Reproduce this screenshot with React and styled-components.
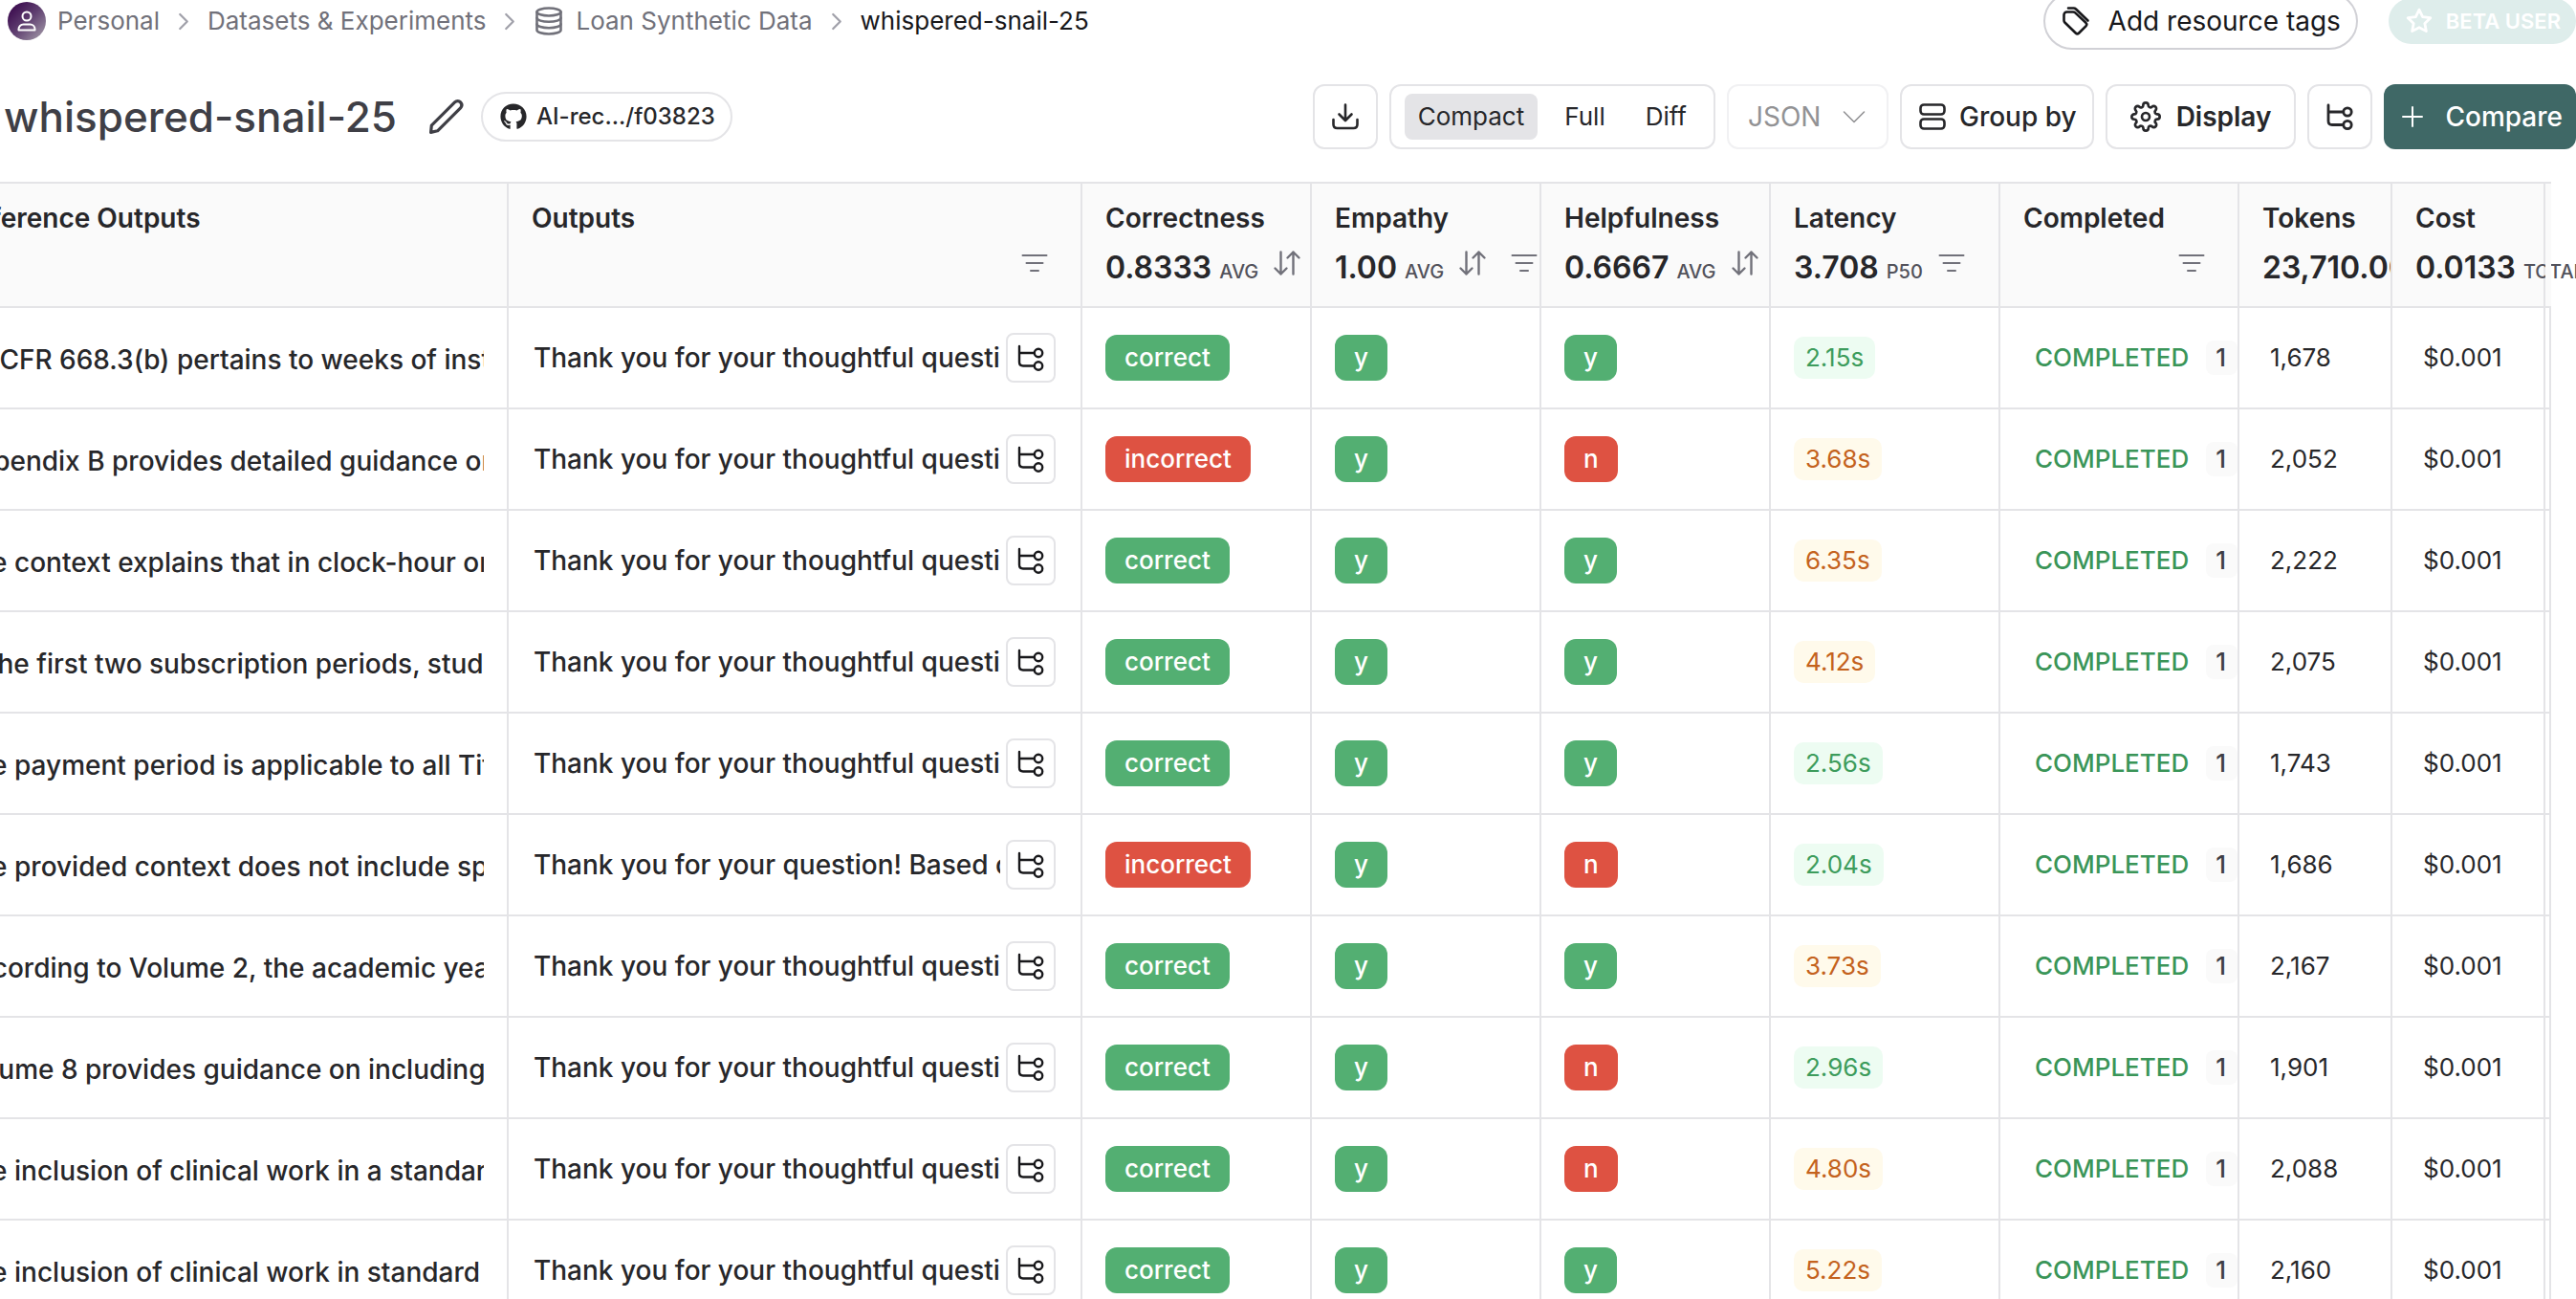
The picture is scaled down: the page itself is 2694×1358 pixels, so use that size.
import React, { useState } from 'react';
import styled, { createGlobalStyle, css } from 'styled-components';
import { FaGithub } from 'react-icons/fa';
import { FiSettings } from 'react-icons/fi';

const GlobalStyle = createGlobalStyle`
  *, *::before, *::after { box-sizing: border-box; }
  body {
    margin: 0;
    background: #ffffff;
    color: #27272a;
    font-family: Inter, "Liberation Sans", sans-serif;
    font-size: 28px;
    line-height: 40px;
  }
  button, select { font: inherit; color: inherit; margin: 0; }
`;

const line = '#e4e4e7';

/* ---------- icons ---------- */

const Icon = styled.svg`
  flex: none;
  display: block;
  width: ${(p) => p.$size || 32}px;
  height: ${(p) => p.$size || 32}px;
  fill: none;
  stroke: currentColor;
  stroke-width: ${(p) => p.$stroke || 2};
  stroke-linecap: round;
  stroke-linejoin: round;
`;

const UserIcon = () => (
  <Icon $size={24} viewBox="0 0 24 24" aria-hidden="true">
    <circle cx="12" cy="7" r="4.5" />
    <path d="M3.5 21.5v-1a5 5 0 0 1 5-5h7a5 5 0 0 1 5 5v1z" />
  </Icon>
);
const ChevronRight = () => (
  <Icon $size={30} $stroke={2.4} viewBox="0 0 32 32" aria-hidden="true">
    <path d="m12 8.500 8 8-8 8" />
  </Icon>
);
const DatabaseIcon = () => (
  <Icon $size={32} $stroke={2.6} viewBox="0 0 32 32" aria-hidden="true">
    <ellipse cx="16" cy="6.500" rx="12.500" ry="4" />
    <path d="M3.500 6.500v19c0 2.200 5.600 4 12.500 4s12.500-1.800 12.500-4v-19" />
    <path d="M3.500 12.800c0 2.200 5.600 4 12.500 4s12.500-1.800 12.500-4M3.500 19.200c0 2.200 5.600 4 12.500 4s12.500-1.800 12.500-4" />
  </Icon>
);
const PencilIcon = () => (
  <Icon $size={40} $stroke={3.2} viewBox="0 0 40 40" aria-hidden="true">
    <path d="M3.600 36.400l.7-7.200L28.600 4.900c1.800-1.800 4.400-1.800 6 0s1.700 4.100 0 5.900L10.600 34.800z" />
  </Icon>
);
const TagIcon = () => (
  <Icon $size={32} $stroke={2.6} viewBox="0 0 32 32" aria-hidden="true">
    <path d="M3.500 9.500v5.800c0 .8.300 1.600.9 2.200l11.300 11c1 1 2.500 1 3.500 0l7.200-7.200c1-1 1-2.500 0-3.500L15.300 7.400c-.6-.6-1.400-.9-2.200-.9H6.500c-1.700 0-3 1.300-3 3z" />
    <path d="M8 2.500h5.600c.9 0 1.700.3 2.400 1l12.500 12" />
  </Icon>
);
const StarIcon = () => (
  <Icon $size={28} $stroke={2.4} viewBox="0 0 24 24" aria-hidden="true">
    <path d="M12 1.800l3.100 6.400 7 1-5.100 4.900 1.300 7L12 17.800l-6.300 3.300 1.300-7L1.900 9.200l7-1z" />
  </Icon>
);
const DownloadIcon = () => (
  <Icon $size={32} $stroke={2.6} viewBox="0 0 32 32" aria-hidden="true">
    <path d="M16 3.500v16M9.500 13.500l6.500 6.500 6.500-6.500M3.500 19v5c0 2.500 1.500 4 4 4h17c2.500 0 4-1.500 4-4v-5" />
  </Icon>
);
const ChevronDown = () => (
  <Icon $size={32} $stroke={1.6} viewBox="0 0 32 32" aria-hidden="true">
    <path d="m5.500 11 10.500 10.500L26.500 11" />
  </Icon>
);
const GroupIcon = () => (
  <Icon $size={32} $stroke={2.6} viewBox="0 0 32 32" aria-hidden="true">
    <rect x="3.500" y="3.500" width="25" height="10" rx="3.500" />
    <rect x="3.500" y="18.500" width="25" height="10" rx="3.500" />
  </Icon>
);
const TreeIcon = ({ stroke }) => (
  <Icon $size={32} $stroke={stroke || 2.4} viewBox="0 0 32 32" aria-hidden="true">
    <path d="M4 4v16.500c0 2.500 1.500 4 4 4h11.500M4 11h15.500" />
    <circle cx="24" cy="11" r="4.200" />
    <circle cx="24" cy="24.500" r="4.200" />
  </Icon>
);
const PlusIcon = () => (
  <Icon $size={32} viewBox="0 0 32 32" aria-hidden="true">
    <path d="M16 6v20M6 16h20" />
  </Icon>
);
const FilterIcon = () => (
  <Icon $size={32} viewBox="0 0 32 32" aria-hidden="true">
    <path d="M3.500 8h25M7.500 16h17M12 24h8" />
  </Icon>
);
const SortIcon = () => (
  <Icon $size={32} $stroke={2.4} viewBox="0 0 32 32" aria-hidden="true">
    <path d="M9.500 4.500v23M3.500 21.500l6 6 6-6M22.500 27.500v-23M16.500 10.500l6-6 6 6" />
  </Icon>
);

/* ---------- page frame ---------- */

const Page = styled.div`
  height: 100vh;
  overflow: hidden;
  display: flex;
  flex-direction: column;
`;

const TopBar = styled.header`
  flex: none;
  height: 44px;
  display: flex;
  align-items: center;
  justify-content: space-between;
`;

const Crumbs = styled.nav`
  display: flex;
  align-items: center;
  gap: 10px;
  padding-left: 8px;
  color: #a1a1aa;
`;

const Crumb = styled.a`
  display: flex;
  align-items: center;
  gap: 12px;
  text-decoration: none;
  white-space: nowrap;
  font-size: 26px;
  line-height: 32px;
  color: ${(p) => (p.$current ? '#18181b' : '#71717a')};
`;

const Avatar = styled.span`
  display: grid;
  place-items: center;
  width: 40px;
  height: 40px;
  border-radius: 50%;
  color: #ffffff;
  background: linear-gradient(135deg, #3f1052 15%, #5f3f70 50%, #a9a3ad 100%);
`;

const TopActions = styled.div`
  display: flex;
  align-items: center;
  gap: 32px;
`;

const TagsButton = styled.button`
  display: flex;
  align-items: center;
  gap: 18px;
  height: 60px;
  padding: 0 16px;
  border: 2px solid #d1d1d6;
  border-radius: 30px;
  background: #ffffff;
  color: #18181b;
  white-space: nowrap;
`;

const BetaBadge = styled.span`
  display: flex;
  align-items: center;
  gap: 14px;
  height: 48px;
  padding: 0 16px 0 18px;
  border-radius: 24px;
  background: #deedeb;
  color: #ffffff;
  font-size: 22px;
  font-weight: 600;
  white-space: nowrap;
`;

const Toolbar = styled.div`
  flex: none;
  display: flex;
  align-items: center;
  justify-content: space-between;
  margin: 44px 0 34px;
`;

const TitleGroup = styled.div`
  display: flex;
  align-items: center;
  padding-left: 4px;
`;

const Title = styled.h1`
  margin: 0 32px 0 0;
  font-size: 44px;
  line-height: 56px;
  font-weight: 500;
  color: #3f3f46;
`;

const PlainButton = styled.button`
  display: grid;
  place-items: center;
  padding: 0;
  border: 0;
  background: none;
  color: ${(p) => p.$color || '#3f3f46'};
`;

const RepoLink = styled.a`
  display: flex;
  align-items: center;
  gap: 10px;
  height: 52px;
  margin-left: 16px;
  padding: 0 16px 0 18px;
  border: 2px solid ${line};
  border-radius: 26px;
  color: #27272a;
  font-size: 24px;
  font-weight: 500;
  text-decoration: none;
  white-space: nowrap;
`;

const Actions = styled.div`
  display: flex;
  align-items: center;
  gap: 12px;
`;

const frame = css`
  height: 68px;
  border: 2px solid ${line};
  border-radius: 12px;
  background: #ffffff;
`;

const IconButton = styled.button`
  ${frame}
  width: 68px;
  padding: 0;
  display: grid;
  place-items: center;
`;

const ToolButton = styled.button`
  ${frame}
  display: flex;
  align-items: center;
  gap: ${(p) => p.$gap || 12}px;
  padding: 0 ${(p) => p.$pad || 16}px;
  font-weight: ${(p) => p.$weight || 500};
  white-space: nowrap;
`;

const CompareButton = styled.button`
  display: flex;
  align-items: center;
  gap: 18px;
  height: 68px;
  padding: 0 14px;
  border: 0;
  border-radius: 12px;
  background: #3f6866;
  color: #ffffff;
  font-weight: 500;
`;

const Segmented = styled.div`
  ${frame}
  display: flex;
  align-items: center;
  gap: 14px;
  padding: 0 14px;
`;

const Segment = styled.button`
  height: 48px;
  padding: 0 14px;
  border: 0;
  border-radius: 8px;
  font-size: 26px;
  font-weight: 400;
  background: ${(p) => (p.$active ? line : 'transparent')};
`;

const SelectBox = styled.label`
  ${frame}
  display: grid;
  grid-template-columns: 1fr 32px;
  align-items: center;
  width: 169px;
  padding: 0 18px 0 20px;
  border-color: #f1f1f3;
  color: #929294;

  select {
    grid-area: 1 / 1 / 2 / 3;
    appearance: none;
    padding: 0;
    border: 0;
    background: none;
    opacity: 1;
  }
  svg { grid-area: 1 / 2; pointer-events: none; }
`;

/* ---------- table ---------- */

const Table = styled.table`
  flex: none;
  width: calc(100% + 42px);
  margin-left: -68px;
  table-layout: fixed;
  border-collapse: separate;
  border-spacing: 0;
`;

const Col = styled.col`
  width: ${(p) => (p.$w ? `${p.$w}px` : 'auto')};
`;

const HeadCell = styled.th`
  height: 132px;
  padding: 16px 0 0 24px;
  border-top: 2px solid ${line};
  border-bottom: 2px solid ${line};
  border-right: 2px solid ${line};
  background: #fafafa;
  text-align: left;
  vertical-align: top;
  font-weight: 600;
  white-space: nowrap;
  overflow: ${(p) => (p.$spill ? 'visible' : 'hidden')};
`;

const EndHead = styled.td`
  position: relative;
  border-top: 2px solid ${line};
  border-bottom: 2px solid ${line};
  background: #fafafa;
`;

const Metric = styled.div`
  display: flex;
  align-items: center;
  height: 40px;
  margin-top: 14px;
  gap: 14px;
  justify-content: ${(p) => (p.$end ? 'flex-end' : 'flex-start')};
  padding-right: ${(p) => (p.$end || 0)}px;
`;

const MetricValue = styled.span`
  display: flex;
  align-items: baseline;
  gap: 8px;
  font-size: 32px;

  small {
    font-size: 20px;
    font-weight: 500;
    color: #52525b;
  }
`;

const MetricTools = styled.span`
  display: flex;
  align-items: center;
  gap: 22px;
  margin-bottom: 14px;
`;

const Cell = styled.td`
  height: 106px;
  padding: 0 0 0 ${(p) => (p.$pad === undefined ? 24 : p.$pad)}px;
  border-bottom: 2px solid ${line};
  border-right: 2px solid ${line};
  font-size: ${(p) => p.$size || 26}px;
  white-space: nowrap;
  overflow: hidden;
`;

const Reference = styled.div`
  margin-right: 24px;
  padding-top: 4px;
  overflow: hidden;
  font-weight: 500;
`;

const OutputRow = styled.div`
  display: flex;
  align-items: center;
  gap: 6px;
  padding-right: 26px;
`;

const OutputText = styled.span`
  flex: 1;
  min-width: 0;
  overflow: hidden;
  font-weight: 500;
`;

const TraceButton = styled.button`
  flex: none;
  width: 52px;
  height: 52px;
  padding: 0;
  display: grid;
  place-items: center;
  border: 2px solid ${line};
  border-radius: 8px;
  background: #ffffff;
  color: #18181b;
`;

const Score = styled.span`
  display: inline-flex;
  align-items: center;
  height: 48px;
  padding: 0 20px;
  border-radius: 12px;
  background: ${(p) => (p.$good ? '#53af72' : '#de5242')};
  color: #ffffff;
  font-weight: 500;
  vertical-align: middle;
`;

const Latency = styled.span`
  display: inline-flex;
  align-items: center;
  height: 44px;
  padding: 0 12px;
  border-radius: 10px;
  background: ${(p) => (p.$fast ? '#edfcf2' : '#fffaeb')};
  color: ${(p) => (p.$fast ? '#3d9c5c' : '#c4621d')};
  vertical-align: middle;
`;

const StatusRow = styled.div`
  display: flex;
  align-items: center;
  gap: 18px;
  color: #3a9558;
  font-weight: 500;
`;

const Count = styled.span`
  flex: 1;
  height: 36px;
  padding-left: 10px;
  border-radius: 8px;
  background: #fafafa;
  color: #3f3f46;
  line-height: 36px;
`;

const thoughtful = 'Thank you for your thoughtful question about';

const rows = [
  ['34 CFR 668.3(b) pertains to weeks of instructional time', thoughtful, true, true, '2.15s', '1,678'],
  ['Appendix B provides detailed guidance on the topic', thoughtful, false, false, '3.68s', '2,052'],
  ['The context explains that in clock-hour or non-term', thoughtful, true, true, '6.35s', '2,222'],
  ['In the first two subscription periods, students', thoughtful, true, true, '4.12s', '2,075'],
  ['The payment period is applicable to all Title IV', thoughtful, true, true, '2.56s', '1,743'],
  ['The provided context does not include specific', 'Thank you for your question! Based on the context', false, false, '2.04s', '1,686'],
  ['According to Volume 2, the academic year', thoughtful, true, true, '3.73s', '2,167'],
  ['Volume 8 provides guidance on including clinical', thoughtful, true, false, '2.96s', '1,901'],
  ['The inclusion of clinical work in a standard term', thoughtful, true, false, '4.80s', '2,088'],
  ['The inclusion of clinical work in standard terms', thoughtful, true, true, '5.22s', '2,160'],
];

const columns = [
  { name: 'Reference Outputs' },
  { name: 'Outputs', filterEnd: 32 },
  { name: 'Correctness', value: '0.8333', unit: 'AVG', sort: true, filter: true },
  { name: 'Empathy', value: '1.00', unit: 'AVG', sort: true, filter: true },
  { name: 'Helpfulness', value: '0.6667', unit: 'AVG', sort: true, filter: true },
  { name: 'Latency', value: '3.708', unit: 'P50', filter: true },
  { name: 'Completed', filterEnd: 32 },
  { name: 'Tokens', value: '23,710.00', unit: 'TOTAL' },
  { name: 'Cost', value: '0.0133', unit: 'TOTAL', spill: true },
];

const Header = ({ column }) => (
  <HeadCell scope="col" $spill={column.spill}>
    {column.name}
    <Metric $end={column.filterEnd}>
      {column.value && (
        <MetricValue>
          {column.value}
          <small>{column.unit}</small>
        </MetricValue>
      )}
      <MetricTools>
        {column.sort && (
          <PlainButton $color="#71717a" aria-label={`Sort by ${column.name}`}><SortIcon /></PlainButton>
        )}
        {(column.filter || column.filterEnd) && (
          <PlainButton $color="#71717a" aria-label={`Filter ${column.name}`}><FilterIcon /></PlainButton>
        )}
      </MetricTools>
    </Metric>
  </HeadCell>
);

export default function App() {
  const [view, setView] = useState('Compact');
  return (
    <Page>
      <GlobalStyle />
      <TopBar>
        <Crumbs aria-label="Breadcrumb">
          <Crumb href="#personal"><Avatar><UserIcon /></Avatar>Personal</Crumb>
          <ChevronRight />
          <Crumb href="#datasets">Datasets &amp; Experiments</Crumb>
          <ChevronRight />
          <Crumb href="#loan"><DatabaseIcon />Loan Synthetic Data</Crumb>
          <ChevronRight />
          <Crumb href="#run" $current>whispered-snail-25</Crumb>
        </Crumbs>
        <TopActions>
          <TagsButton><TagIcon />Add resource tags</TagsButton>
          <BetaBadge><StarIcon />BETA USER</BetaBadge>
        </TopActions>
      </TopBar>

      <Toolbar>
        <TitleGroup>
          <Title>whispered-snail-25</Title>
          <PlainButton aria-label="Rename"><PencilIcon /></PlainButton>
          <RepoLink href="#repo"><FaGithub size={28} />AI-rec.../f03823</RepoLink>
        </TitleGroup>
        <Actions>
          <IconButton aria-label="Download"><DownloadIcon /></IconButton>
          <Segmented>
            {['Compact', 'Full', 'Diff'].map((name) => (
              <Segment key={name} $active={view === name} aria-pressed={view === name} onClick={() => setView(name)}>
                {name}
              </Segment>
            ))}
          </Segmented>
          <SelectBox>
            <select disabled aria-label="Format"><option>JSON</option></select>
            <ChevronDown />
          </SelectBox>
          <ToolButton><GroupIcon />Group by</ToolButton>
          <ToolButton $weight={600} $gap={16} $pad={24}><FiSettings size={32} />Display</ToolButton>
          <IconButton aria-label="Trace view"><TreeIcon stroke={2.8} /></IconButton>
          <CompareButton><PlusIcon />Compare</CompareButton>
        </Actions>
      </Toolbar>

      <Table>
        <colgroup>
          <Col /><Col />
          <Col $w={240} /><Col $w={240} /><Col $w={240} /><Col $w={240} />
          <Col $w={250} /><Col $w={160} /><Col $w={160} /><Col $w={6} />
        </colgroup>
        <thead>
          <tr>
            {columns.map((c) => <Header key={c.name} column={c} />)}
            <EndHead />
          </tr>
        </thead>
        <tbody>
          {rows.map(([reference, output, correct, helpful, latency, tokens]) => (
            <tr key={reference}>
              <Cell $size={28}><Reference>{reference}</Reference></Cell>
              <Cell $size={28} $pad={26}>
                <OutputRow>
                  <OutputText>{output}</OutputText>
                  <TraceButton aria-label="Open trace"><TreeIcon /></TraceButton>
                </OutputRow>
              </Cell>
              <Cell><Score $good={correct}>{correct ? 'correct' : 'incorrect'}</Score></Cell>
              <Cell><Score $good>y</Score></Cell>
              <Cell><Score $good={helpful}>{helpful ? 'y' : 'n'}</Score></Cell>
              <Cell><Latency $fast={parseFloat(latency) < 3}>{latency}</Latency></Cell>
              <Cell $pad={36}><StatusRow>COMPLETED<Count>1</Count></StatusRow></Cell>
              <Cell $pad={32}>{tokens}</Cell>
              <Cell $pad={32}>$0.001</Cell>
              <Cell $pad={0} />
            </tr>
          ))}
        </tbody>
      </Table>
    </Page>
  );
}
